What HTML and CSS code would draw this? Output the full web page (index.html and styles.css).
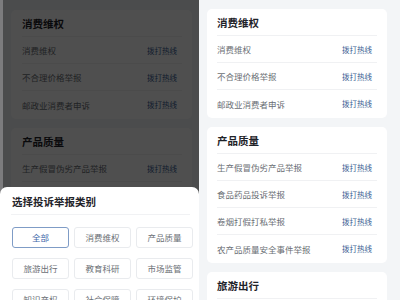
FILE: index.html
```html
<!DOCTYPE html>
<html lang="zh-CN">
<head>
    <meta charset="UTF-8">
    <meta name="viewport" content="width=device-width, initial-scale=1.0">
    <title>投诉举报</title>
    <link rel="stylesheet" href="styles.css">
</head>
<body>
    <div class="screens">
        <!-- 左边：打开了类别选择弹层 -->
        <div class="screen screen-left">
            <div class="page page-left">
                <div class="card">
                    <div class="card-title">消费维权</div>
                    <div class="row"><span>消费维权</span><a class="call">拨打热线</a></div>
                    <div class="row"><span>不合理价格举报</span><a class="call">拨打热线</a></div>
                    <div class="row"><span>邮政业消费者申诉</span><a class="call">拨打热线</a></div>
                </div>
                <div class="card">
                    <div class="card-title">产品质量</div>
                    <div class="row"><span>生产假冒伪劣产品举报</span><a class="call">拨打热线</a></div>
                    <div class="row"><span>食品药品投诉举报</span><a class="call">拨打热线</a></div>
                </div>
            </div>
            <div class="mask"></div>
            <div class="sheet">
                <div class="sheet-title">选择投诉举报类别</div>
                <div class="types">
                    <div class="type active">全部</div>
                    <div class="type">消费维权</div>
                    <div class="type">产品质量</div>
                    <div class="type">旅游出行</div>
                    <div class="type">教育科研</div>
                    <div class="type">市场监管</div>
                    <div class="type">知识产权</div>
                    <div class="type">社会保障</div>
                    <div class="type">环境保护</div>
                </div>
            </div>
        </div>

        <!-- 右边：列表 -->
        <div class="screen screen-right">
            <div class="page">
                <div class="card">
                    <div class="card-title">消费维权</div>
                    <div class="row"><span>消费维权</span><a class="call">拨打热线</a></div>
                    <div class="row"><span>不合理价格举报</span><a class="call">拨打热线</a></div>
                    <div class="row"><span>邮政业消费者申诉</span><a class="call">拨打热线</a></div>
                </div>
                <div class="card">
                    <div class="card-title">产品质量</div>
                    <div class="row"><span>生产假冒伪劣产品举报</span><a class="call">拨打热线</a></div>
                    <div class="row"><span>食品药品投诉举报</span><a class="call">拨打热线</a></div>
                    <div class="row"><span>卷烟打假打私举报</span><a class="call">拨打热线</a></div>
                    <div class="row"><span>农产品质量安全事件举报</span><a class="call">拨打热线</a></div>
                </div>
                <div class="card">
                    <div class="card-title">旅游出行</div>
                    <div class="row"><span>旅游投诉</span><a class="call">拨打热线</a></div>
                </div>
            </div>
        </div>
    </div>
</body>
</html>
```

FILE: styles.css
```css
* {
    box-sizing: border-box;
}
body {
    margin: 0;
    width: 400px;
    height: 300px;
    overflow: hidden;
    background-color: #f3f5f7;
    font-family: "Noto Sans CJK SC", "Noto Sans", sans-serif;
}
.screens {
    display: flex;
    height: 300px;
}
.screen {
    position: relative;
    height: 300px;
    overflow: hidden;
    background-color: #f3f5f7;
}
.screen-left {
    width: 199px;
}
.screen-right {
    width: 201px;
}
.page {
    display: flex;
    flex-direction: column;
    gap: 9px;
    padding: 9px 0 0 8px;
}
.page-left {
    padding: 10px 0 0 11px;
}
.card {
    width: 180px;
    padding: 0 10px 1px 10px;
    background-color: #fff;
    border-radius: 5px;
}
.page-left .card {
    width: 181px;
    padding-left: 11px;
}
.card-title {
    height: 27px;
    line-height: 28px;
    font-size: 10.5px;
    font-weight: bold;
    color: #1f2329;
    border-bottom: 1px solid #f0f1f3;
}
.row {
    display: flex;
    justify-content: space-between;
    align-items: center;
    height: 27px;
    padding-right: 5px;
    font-size: 8.5px;
    color: #6b6f75;
    border-bottom: 1px solid #f0f1f3;
}
.row:last-child {
    border-bottom: none;
}
.call {
    font-size: 7.5px;
    color: #3d5f94;
}
.mask {
    position: absolute;
    inset: 0;
    background-color: rgba(0, 0, 0, 0.69);
    border-left: 3px solid #7c7c7e;
}
.sheet {
    position: absolute;
    left: 0;
    right: 0;
    top: 187px;
    bottom: 0;
    background-color: #fff;
    border-radius: 7px 7px 0 0;
    padding: 0 9px 0 11px;
}
.sheet-title {
    height: 28px;
    line-height: 30px;
    padding-left: 1px;
    font-size: 10.5px;
    font-weight: bold;
    color: #1f2329;
    border-bottom: 1px solid #f1f2f4;
}
.types {
    display: grid;
    grid-template-columns: repeat(3, 57px);
    column-gap: 5px;
    row-gap: 10px;
    margin-top: 12px;
    padding-left: 1px;
}
.type {
    height: 21px;
    line-height: 19px;
    text-align: center;
    font-size: 8.5px;
    color: #6b6f75;
    border: 1px solid #e9ebee;
    border-radius: 3px;
}
.type.active {
    color: #3d66a8;
    border-color: #7f9cc6;
}
```
